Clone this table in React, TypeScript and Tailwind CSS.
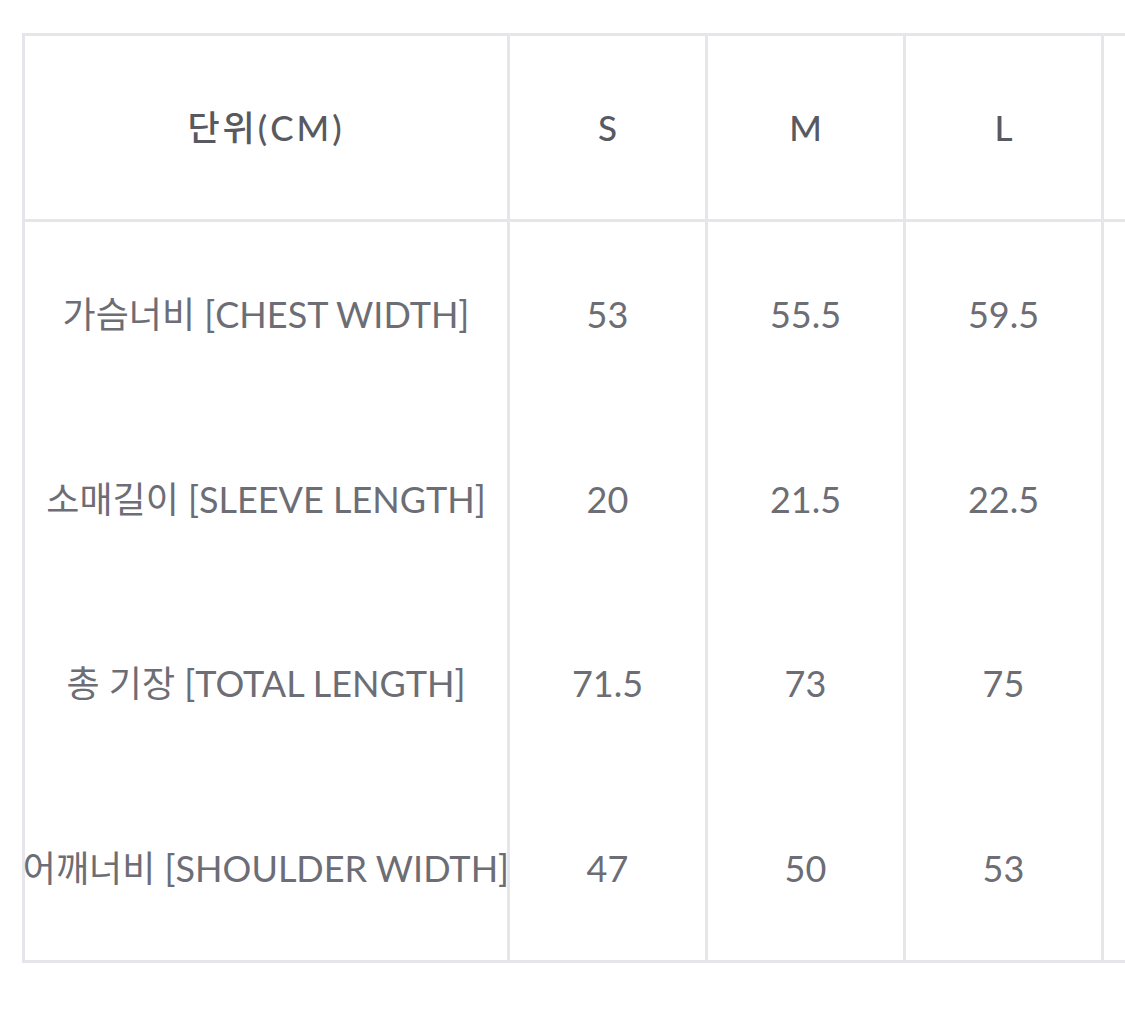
import React from 'react';

const sizes = ['S', 'M', 'L'];

const rows = [
    { label: '가슴너비 [CHEST WIDTH]', values: ['53', '55.5', '59.5'] },
    { label: '소매길이 [SLEEVE LENGTH]', values: ['20', '21.5', '22.5'] },
    { label: '총 기장 [TOTAL LENGTH]', values: ['71.5', '73', '75'] },
    { label: '어깨너비 [SHOULDER WIDTH]', values: ['47', '50', '53'] },
];

const font = { fontFamily: 'Lato, "Noto Sans CJK KR", sans-serif' };

export default function App() {
    return (
        <div className="w-[1125px] h-[1012px] overflow-hidden bg-white pt-[33px] pl-[22px]" style={font}>
            <div className="w-[1200px] border-[3px] border-r-0 border-[#e5e5ea] flex flex-col">
                {/* Header */}
                <div className="flex h-[186px] border-b-[3px] border-[#e5e5ea] text-[#585961] font-medium text-[35px]">
                    <div className="w-[482px] shrink-0 flex items-center justify-center tracking-[3px]">단위(CM)</div>
                    {sizes.map((s) => (
                        <div
                            key={s}
                            className="w-[198px] shrink-0 border-l-[3px] border-[#e5e5ea] flex items-center justify-center"
                        >
                            {s}
                        </div>
                    ))}
                    <div className="flex-1 border-l-[3px] border-[#e5e5ea]" />
                </div>

                {/* Body */}
                {rows.map((row) => (
                    <div key={row.label} className="flex h-[184.5px] text-[#6c6d75] text-[36px]">
                        <div className="w-[482px] shrink-0 flex items-center justify-center whitespace-nowrap">
                            {row.label}
                        </div>
                        {row.values.map((v, i) => (
                            <div
                                key={i}
                                className="w-[198px] shrink-0 border-l-[3px] border-[#e5e5ea] flex items-center justify-center"
                            >
                                {v}
                            </div>
                        ))}
                        <div className="flex-1 border-l-[3px] border-[#e5e5ea]" />
                    </div>
                ))}
            </div>
        </div>
    );
}
